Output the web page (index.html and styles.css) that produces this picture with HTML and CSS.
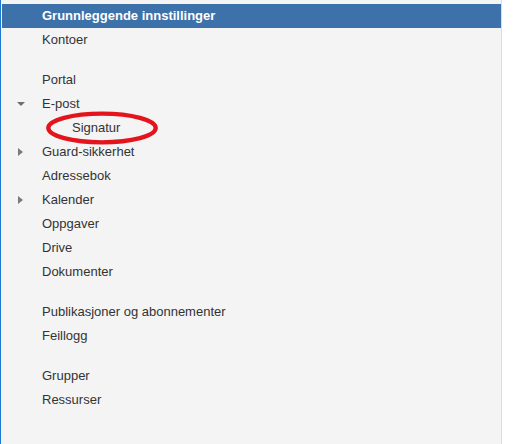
FILE: index.html
```html
<!DOCTYPE html>
<html lang="no">
<head>
<meta charset="utf-8">
<title>Innstillinger</title>
<link rel="stylesheet" href="styles.css">
</head>
<body>
<nav class="panel">
  <ul class="tree">
    <li class="item selected"><span class="label">Grunnleggende innstillinger</span></li>
    <li class="item"><span class="label">Kontoer</span></li>
    <li class="spacer"></li>
    <li class="item"><span class="label">Portal</span></li>
    <li class="item open"><span class="caret down"></span><span class="label">E-post</span></li>
    <li class="item child"><span class="label mark">Signatur<svg class="ring" viewBox="0 0 112 34" width="112" height="34"><ellipse cx="56" cy="17" rx="53.7" ry="14.3" fill="none" stroke="#e3141c" stroke-width="4.3"/></svg></span></li>
    <li class="item"><span class="caret right"></span><span class="label">Guard-sikkerhet</span></li>
    <li class="item"><span class="label">Adressebok</span></li>
    <li class="item"><span class="caret right"></span><span class="label">Kalender</span></li>
    <li class="item"><span class="label">Oppgaver</span></li>
    <li class="item"><span class="label">Drive</span></li>
    <li class="item"><span class="label">Dokumenter</span></li>
    <li class="spacer"></li>
    <li class="item"><span class="label">Publikasjoner og abonnementer</span></li>
    <li class="item"><span class="label">Feillogg</span></li>
    <li class="spacer"></li>
    <li class="item"><span class="label">Grupper</span></li>
    <li class="item"><span class="label">Ressurser</span></li>
  </ul>
</nav>
</body>
</html>
```
FILE: styles.css
```css
html, body {
  margin: 0;
  padding: 0;
  background: #ffffff;
}
body {
  font-family: "Liberation Sans", Arial, sans-serif;
  font-size: 13px;
  color: #333333;
  height: 444px;
  overflow: hidden;
}
.panel {
  box-sizing: border-box;
  width: 502px;
  height: 444px;
  background: #f4f4f4;
  border-left: 1px solid #1f78d1;
  border-right: 1px solid #dcdcdc;
  padding: 4px 0 0 1px;
}
.tree {
  list-style: none;
  margin: 0;
  padding: 0;
}
.item {
  position: relative;
  height: 24px;
  line-height: 24px;
  padding-left: 40px;
  white-space: nowrap;
}
.item.child {
  padding-left: 70px;
}
.spacer {
  height: 16px;
}
.selected {
  background: #3c72a9;
  color: #ffffff;
  font-weight: bold;
}
.caret {
  position: absolute;
  width: 0;
  height: 0;
}
.caret.down {
  left: 15px;
  top: 10px;
  border-left: 4px solid transparent;
  border-right: 4px solid transparent;
  border-top: 4px solid #6e6e6e;
}
.caret.right {
  left: 16px;
  top: 8px;
  border-top: 4px solid transparent;
  border-bottom: 4px solid transparent;
  border-left: 5px solid #7a7a7a;
}
.mark {
  position: relative;
}
.ring {
  position: absolute;
  left: -26.5px;
  top: -9px;
  pointer-events: none;
}
```
